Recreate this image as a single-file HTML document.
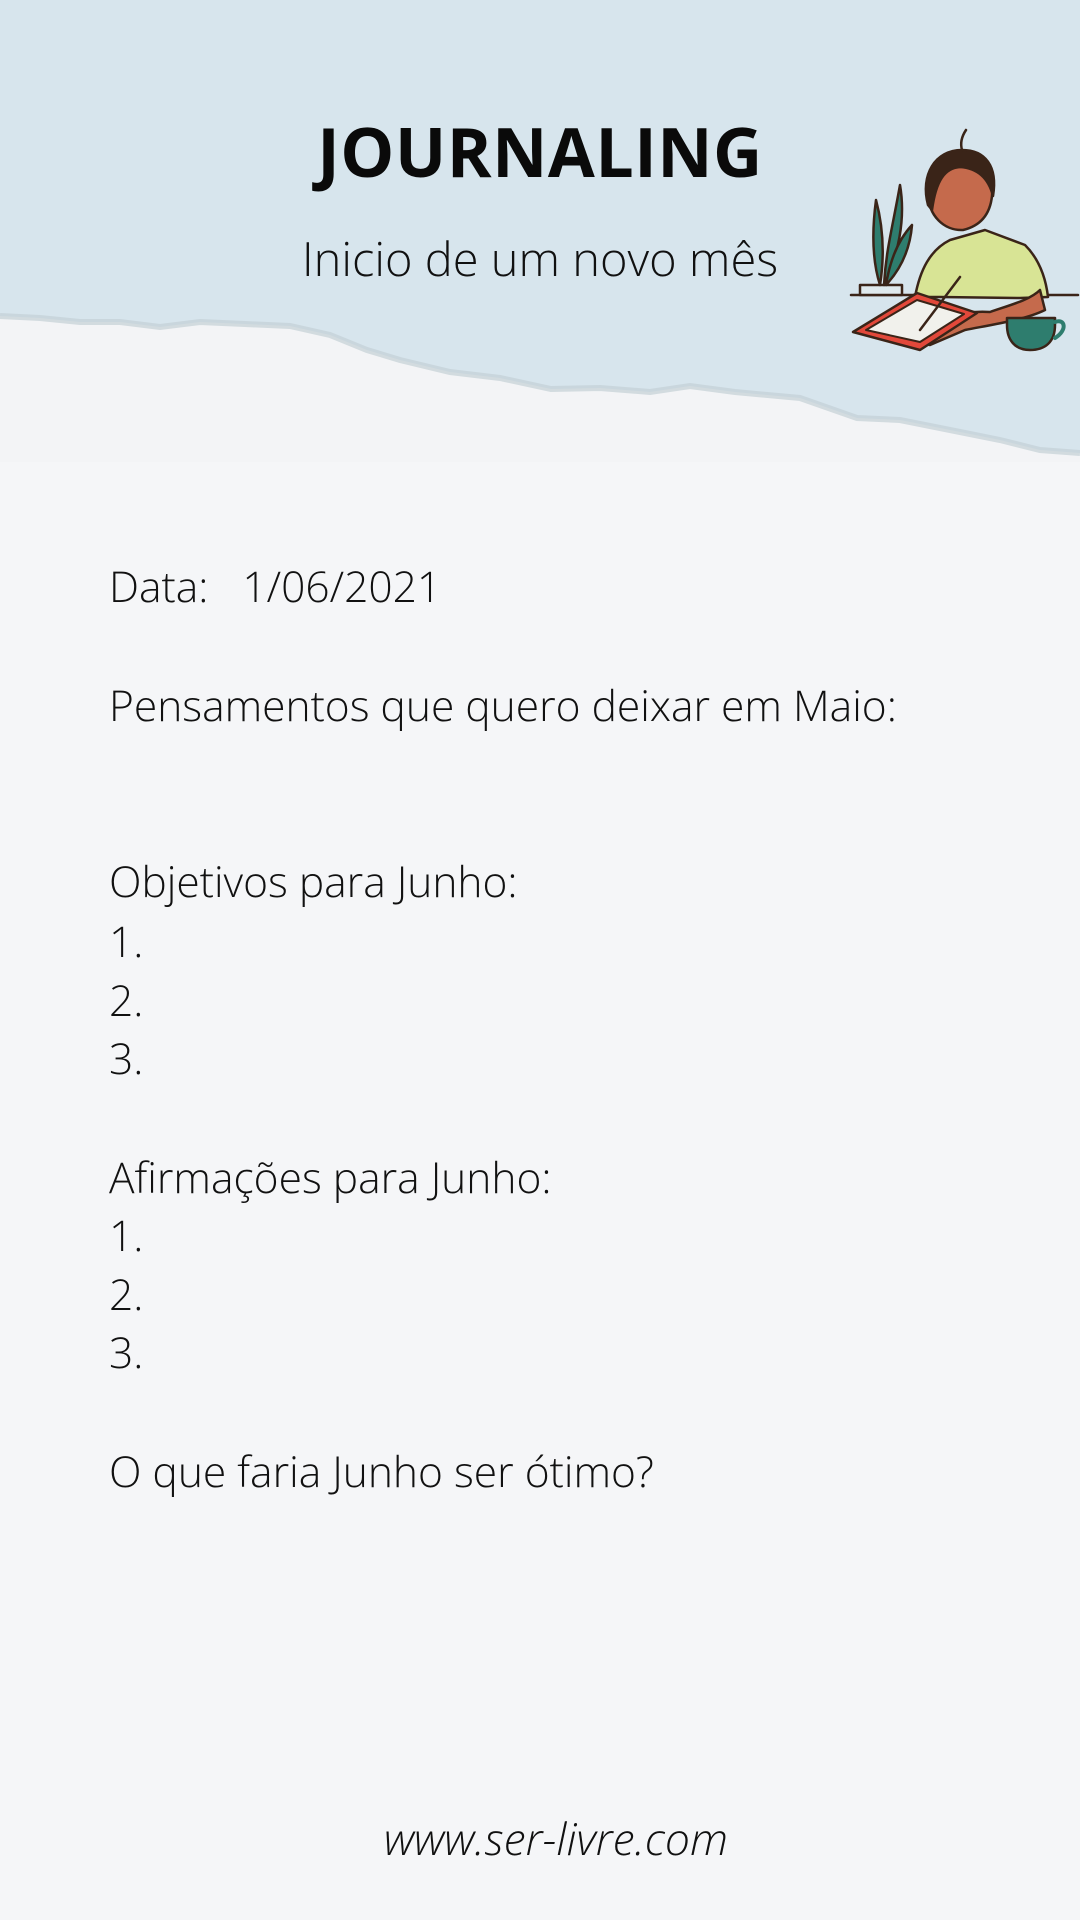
<!DOCTYPE html>
<html><head><meta charset="utf-8"><style>
html,body{margin:0;padding:0}
body{width:1080px;height:1920px;position:relative;background:#f5f6f8;overflow:hidden;font-family:"Open Sans","Liberation Sans",sans-serif;}
.t{position:absolute;color:#111;font-weight:300;white-space:nowrap}
.b{font-size:42.5px;left:109px}
</style></head><body>
<svg style="position:absolute;left:0;top:0" width="1080" height="480">
<rect width="1080" height="480" fill="#f3f4f6"/>
<path d="M0 0H1080V453L1040 450L1000 440L960 432L900 420L857 418L800 398L735 392L690 386L650 392L600 388L551 389L500 378L450 372L400 360L367 350L330 335L290 326L245 324L200 322L160 327L120 322L80 322L40 318L0 316Z" fill="#d7e5ed"/>
<path d="M0 316L40 318L80 322L120 322L160 327L200 322L245 324L290 326L330 335L367 350L400 360L450 372L500 378L551 389L600 388L650 392L690 386L735 392L800 398L857 418L900 420L960 432L1000 440L1040 450L1080 453" fill="none" stroke="#c3d0d6" stroke-width="6" opacity=".7"/>
<rect y="462" width="1080" height="20" fill="#f5f6f8"/>
<g stroke="#3a2418" stroke-width="2.5" stroke-linejoin="round" stroke-linecap="round">
<line x1="851" y1="295" x2="1078" y2="295"/>
<rect x="860" y="285" width="42" height="10" fill="#dfe9ed"/>
<path d="M880 285C872 260 872 230 876 200C884 230 884 260 880 285Z" fill="#2e7d6e"/>
<path d="M884 285C886 250 892 230 900 185C906 220 898 255 884 285Z" fill="#2e7d6e"/>
<path d="M886 285C890 260 898 240 912 225C910 250 900 270 886 285Z" fill="#2e7d6e"/>
<path d="M915 297C920 270 930 250 950 240L985 230L1025 245C1040 260 1046 280 1048 297L1020 298L940 297Z" fill="#d8e495"/>
<path d="M929 195C930 168 945 155 964 156C984 158 994 175 992 196C990 215 980 226 963 230C944 231 928 215 929 195Z" fill="#c56a4c"/>
<path d="M928 205C920 175 935 150 962 150C985 150 998 166 993 196C988 176 975 168 960 167C945 168 936 180 932 210Z" fill="#3a2418"/>
<path d="M962 150C960 143 962 136 966 130" fill="none"/>
<path d="M905 340C930 320 960 310 990 312C1010 305 1030 300 1040 290L1045 310C1025 320 990 325 965 330L930 345Z" fill="#c56a4c"/>
<path d="M853 332L917 293L977 313L920 350Z" fill="#e2483a"/>
<path d="M866 330L917 300L964 314L920 342Z" fill="#f1f1ec" stroke-width="2"/>
<line x1="920" y1="330" x2="960" y2="277"/>
<path d="M1007 318H1055V325C1055 342 1045 350 1030 350C1015 350 1007 340 1007 325Z" fill="#2e7d6e"/>
<path d="M1055 322C1065 318 1068 330 1055 338" fill="none" stroke="#2e7d6e" stroke-width="4"/>
</g>
</svg>
<div class="t" style="left:0;width:1080px;text-align:center;top:104px;font-size:68px;font-weight:700;letter-spacing:0.5px;color:#0a0a0a">JOURNALING</div>
<div class="t" style="left:0;width:1080px;text-align:center;top:226px;font-size:47px">Inicio de um novo mês</div>
<div class="t b" style="top:558px">Data:<span style="margin-left:34px">1/06/2021</span></div>
<div class="t b" style="top:677px">Pensamentos que quero deixar em Maio:</div>
<div class="t b" style="top:853px">Objetivos para Junho:</div>
<div class="t b" style="top:913px">1.</div>
<div class="t b" style="top:972px">2.</div>
<div class="t b" style="top:1030px">3.</div>
<div class="t b" style="top:1149px">Afirmações para Junho:</div>
<div class="t b" style="top:1207px">1.</div>
<div class="t b" style="top:1266px">2.</div>
<div class="t b" style="top:1324px">3.</div>
<div class="t b" style="top:1443px">O que faria Junho ser ótimo?</div>
<div class="t" style="left:0;width:1112px;text-align:center;top:1808px;font-size:44.5px;font-style:italic">www.ser-livre.com</div>
</body></html>
